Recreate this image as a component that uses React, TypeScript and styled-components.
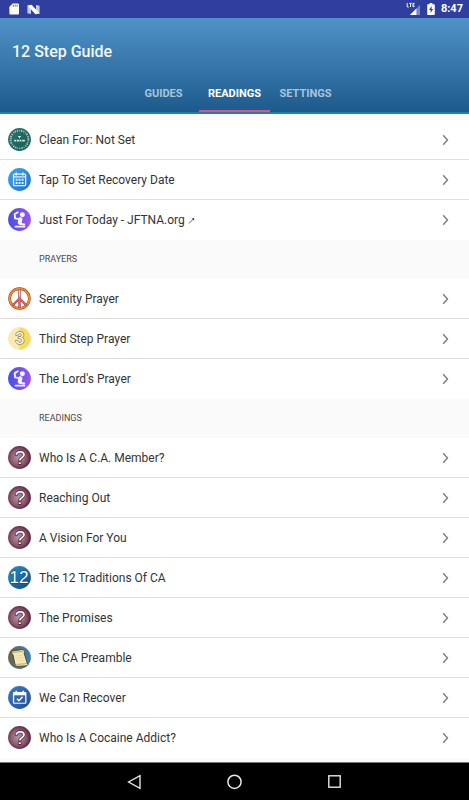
import React, { useState } from "react";
import styled, { createGlobalStyle } from "styled-components";

const GlobalStyle = createGlobalStyle`
  * { box-sizing: border-box; }
  body {
    margin: 0;
    background: #fafafa;
    font-family: Roboto, "Liberation Sans", sans-serif;
  }
`;

const Screen = styled.div`
  display: flex;
  flex-direction: column;
  min-height: 100vh;
`;

const StatusBar = styled.div`
  display: flex;
  align-items: center;
  justify-content: space-between;
  height: 18px;
  padding: 0 6px 0 8px;
  background: #303f9f;
  color: #fff;
`;

const StatusGroup = styled.div<{ $gap: number }>`
  display: flex;
  align-items: center;
  gap: ${(p) => p.$gap}px;
`;

const Clock = styled.time`
  font-size: 11px;
  line-height: 18px;
  font-weight: 700;
`;

const Header = styled.header`
  display: flex;
  flex-direction: column;
  justify-content: space-between;
  height: 96px;
  border-bottom: 2px solid #1c7fa8;
  background: linear-gradient(#5093c8, #1d5a8c);
`;

const Title = styled.h1`
  margin: 0;
  padding: 20px 12px 0;
  color: #f4f7fb;
  font-size: 16px;
  line-height: 28px;
  font-weight: 500;
`;

const Tabs = styled.div`
  display: flex;
  justify-content: center;
`;

const Tab = styled.button<{ $active: boolean }>`
  width: 71px;
  height: 38px;
  padding: 4px 0 0;
  border: 0;
  border-bottom: 2px solid ${(p) => (p.$active ? "#e0528c" : "transparent")};
  background: none;
  color: ${(p) => (p.$active ? "#fff" : "#a9c4da")};
  font: 700 11px/32px Roboto, "Liberation Sans", sans-serif;
  text-align: center;
`;

const Content = styled.main`
  flex: 1;
  padding: 6px 0 3px;
`;

const Section = styled.section``;

const SectionTitle = styled.h2`
  margin: 0;
  padding: 0 39px;
  color: #4a4a4a;
  font-size: 9px;
  line-height: 39px;
  font-weight: 400;
`;

const List = styled.ul`
  margin: 0;
  padding: 0;
  list-style: none;
  background: #fff;
`;

const Item = styled.li`
  border-bottom: 1px solid #e0e0e0;

  &:last-child {
    border-bottom-color: transparent;
  }
`;

const RowLink = styled.a`
  display: flex;
  align-items: center;
  gap: 8px;
  height: 39px;
  padding: 0 20px 0 8px;
  color: #333;
  text-decoration: none;
`;

const Label = styled.span`
  flex: 1;
  font-size: 12px;
  line-height: 18px;
`;

const NavBar = styled.nav`
  display: flex;
  align-items: center;
  justify-content: center;
  gap: 76px;
  height: 38px;
  border-top: 1px solid #777;
  background: #000;
`;

const NavButton = styled.button`
  display: flex;
  align-items: center;
  justify-content: center;
  width: 24px;
  height: 36px;
  padding: 0;
  border: 0;
  background: none;
`;

type IconName = "medal" | "calendar" | "pray" | "peace" | "three" | "question" | "twelve" | "scroll" | "check";

const fills: Record<IconName, [string, string]> = {
  medal: ["#28766d", "#195b56"],
  calendar: ["#3aa7ea", "#2371c8"],
  pray: ["#4650e6", "#9a55f2"],
  peace: ["#fff", "#fff"],
  three: ["#fbe9b4", "#fbe9b4"],
  question: ["#b598a6", "#58203c"],
  twelve: ["#2b90cb", "#124b7d"],
  scroll: ["#6b6546", "#3a80b8"],
  check: ["#3c7bc4", "#234f96"],
};

const glyph = {
  textAnchor: "middle" as const,
  fontFamily: '"Liberation Sans", sans-serif',
  fill: "#fff",
  paintOrder: "stroke",
};

const drawings: Record<IconName, React.ReactNode> = {
  medal: (
    <g fill="none" stroke="#d5e5df">
      <circle cx="12" cy="12" r="9.3" strokeWidth="2" strokeDasharray="1.2 1.3 .7 1 1.5 1.1" opacity=".75" />
      <path d="M10.5 8.8h3M12 8.8v2" strokeWidth="1.1" />
      <path d="M6.5 13.2h2M9.2 13.2h2.2M12 13.2h2M14.8 13.2h2.8" strokeWidth="2" />
      <path d="M3 10v3M21 10v3" strokeWidth=".8" opacity=".6" />
    </g>
  ),
  calendar: (
    <g stroke="#e4f3ff" fill="none">
      <rect x="5.8" y="6.5" width="12.6" height="12" rx="1" strokeWidth="1.3" />
      <path d="M6 9.3h12" strokeWidth="1.3" />
      <path d="M8.7 4.8v3M15.5 4.8v3" strokeWidth="1.6" />
      <path d="M8 12.3h2M11.1 12.3h2M14.2 12.3h2M8 15.6h2M11.1 15.6h2M14.2 15.6h2" strokeWidth="2" />
    </g>
  ),
  pray: (
    <g fill="none" stroke="#f4f2ff" strokeLinecap="round" strokeLinejoin="round">
      <circle cx="15" cy="7" r="2.6" fill="#f4f2ff" stroke="none" />
      <path d="M10.2 4.4 7 6.4l.4 4.4 4.6.8" strokeWidth="2" />
      <path d="M13 11.6 12.2 15.4" strokeWidth="4.2" />
      <path d="M12.5 16.4 17 17.2M7.8 19.4h9.4" strokeWidth="2" />
    </g>
  ),
  peace: (
    <g fill="none">
      <circle cx="12" cy="12" r="10.3" stroke="#8d3821" strokeWidth="2.7" />
      <circle cx="12" cy="12" r="10.3" stroke="#f28a2c" strokeWidth="1.9" />
      <path d="M12 2v20M12 12 4.8 19M12 12l7.2 7" stroke="#862a35" strokeWidth="2.3" />
      <path d="M12 2v20M12 12 4.8 19M12 12l7.2 7" stroke="#e8696a" strokeWidth="1.5" />
      <path d="M12 3v7" stroke="#f8c1b3" strokeWidth="1.2" />
    </g>
  ),
  three: (
    <g>
      <path d="M12 .5a11.5 11.5 0 0 1 0 23Z" fill="#f9d95f" />
      <text x="12.2" y="18" fontSize="17" stroke="#8d7d43" strokeWidth="1.4" {...glyph}>3</text>
    </g>
  ),
  question: (
    <text x="12.6" y="19" fontSize="20" stroke="#3e1c2d" strokeWidth="1.4" {...glyph}>?</text>
  ),
  twelve: (
    <text x="11.6" y="18.2" fontSize="18" stroke="#15456b" strokeWidth="1.2" {...glyph}>12</text>
  ),
  scroll: (
    <g>
      <path d="M4.2 5.2 15.5 3.6l2 2-.7 1.8L20 17.8l1 1.4-1.2 1.5-10.4.6-2-1.6L5.2 9.2 3.4 7Z" fill="#f4e8b5" stroke="#433e2b" strokeWidth=".9" />
      <path d="M4.5 6.8 16 5.6M9 19.2l11-.8" stroke="#b59e5d" strokeWidth=".9" />
      <path d="m8 10.4 7-.7M8.7 13l7-.7M9.4 15.6l7-.7" stroke="#e2d49a" strokeWidth=".7" />
    </g>
  ),
  check: (
    <g fill="none" stroke="#fff">
      <rect x="5.8" y="7" width="12.8" height="11" rx=".7" strokeWidth="1.3" />
      <path d="M5.8 8.4h12.8" strokeWidth="2.6" />
      <path d="M8.6 5v3M15.8 5v3" strokeWidth="1.6" />
      <path d="m9.4 13.3 2 2 3.8-4" strokeWidth="1.5" />
    </g>
  ),
};

function RoundIcon({ name, id }: { name: IconName; id: string }) {
  const [from, to] = fills[name];
  return (
    <svg width="23" height="23" viewBox="0 0 24 24" aria-hidden="true">
      <defs>
        {name === "question" ? (
          <radialGradient id={id} cx=".45" cy=".5" r=".55">
            <stop offset="0" stopColor={from} />
            <stop offset=".6" stopColor="#8c5c74" />
            <stop offset="1" stopColor={to} />
          </radialGradient>
        ) : (
          <linearGradient id={id} x1="0" y1="0" x2="1" y2={name === "scroll" || name === "pray" ? 0 : 1}>
            <stop offset="0" stopColor={from} />
            <stop offset="1" stopColor={to} />
          </linearGradient>
        )}
      </defs>
      <circle cx="12" cy="12" r="11.9" fill={`url(#${id})`} />
      {drawings[name]}
    </svg>
  );
}

function Chevron() {
  return (
    <svg width="8" height="12" viewBox="0 0 8 12" fill="none" stroke="#7a7a7a" strokeWidth="1.4" aria-hidden="true">
      <path d="m2.2 1.2 4.3 4.8-4.3 4.8" />
    </svg>
  );
}

function ExternalArrow() {
  return (
    <svg width="7" height="7" viewBox="0 0 8 8" fill="none" stroke="#333" strokeWidth=".9" role="img" aria-label="external">
      <path d="M1 7.4 6 2.4" />
      <path d="M4.2 1.4h2.8v2.8Z" fill="#333" stroke="none" />
    </svg>
  );
}

type Entry = { icon: IconName; label: string; external?: boolean };

const sections: { title?: string; entries: Entry[] }[] = [
  {
    entries: [
      { icon: "medal", label: "Clean For: Not Set" },
      { icon: "calendar", label: "Tap To Set Recovery Date" },
      { icon: "pray", label: "Just For Today - JFTNA.org", external: true },
    ],
  },
  {
    title: "PRAYERS",
    entries: [
      { icon: "peace", label: "Serenity Prayer" },
      { icon: "three", label: "Third Step Prayer" },
      { icon: "pray", label: "The Lord's Prayer" },
    ],
  },
  {
    title: "READINGS",
    entries: [
      { icon: "question", label: "Who Is A C.A. Member?" },
      { icon: "question", label: "Reaching Out" },
      { icon: "question", label: "A Vision For You" },
      { icon: "twelve", label: "The 12 Traditions Of CA" },
      { icon: "question", label: "The Promises" },
      { icon: "scroll", label: "The CA Preamble" },
      { icon: "check", label: "We Can Recover" },
      { icon: "question", label: "Who Is A Cocaine Addict?" },
    ],
  },
];

const tabs = ["GUIDES", "READINGS", "SETTINGS"];

export default function App() {
  const [active, setActive] = useState("READINGS");
  return (
    <Screen>
      <GlobalStyle />
      <StatusBar>
        <StatusGroup $gap={7}>
          <svg width="12" height="12" viewBox="0 0 12 12" aria-hidden="true">
            <path d="M4.7.5H10q1 0 1 1v9q0 1-1 1H2.4q-1 0-1-1V3.8Z" fill="#fff" />
            <path d="M5.3 1.7v2M7.2 1.7v2M9.1 1.7v2" stroke="#303f9f" strokeWidth=".8" />
          </svg>
          <svg width="13" height="11" viewBox="0 0 13 11" aria-hidden="true">
            <path d="M.4 1.4 4 3.8V10L.4 9.2ZM9 1l3.6.8v8L9 7.4Z" fill="#c3c9ec" />
            <path d="M.4 1.4 4.6.8 12.6 9.6l-4.2.6Z" fill="#fff" />
          </svg>
        </StatusGroup>
        <StatusGroup $gap={6}>
          <svg width="15" height="14" viewBox="0 0 15 14" aria-label="LTE" role="img">
            <path d="M14 3v10H4Z" fill="#7d87c6" />
            <path d="M10.4 6.6V13H4Z" fill="#fff" />
            <path d="M1.2 1v4h1.6M3.2 1.4h2.6M4.5 1.4V5M8.6 1.4H6.9V4.6h1.7M6.9 3h1.5" fill="none" stroke="#fff" strokeWidth=".9" />
          </svg>
          <svg width="8" height="12" viewBox="0 0 8 12" aria-hidden="true">
            <path d="M2.6 0h2.8v1.2H7q.8 0 .8.8v9q0 .9-.8.9H1q-.8 0-.8-.9V2q0-.8.8-.8h1.6Z" fill="#fff" />
            <path d="M4.6 3 2 7h1.6v3L6.1 6H4.6Z" fill="#303f9f" />
          </svg>
          <Clock>8:47</Clock>
        </StatusGroup>
      </StatusBar>
      <Header>
        <Title>12 Step Guide</Title>
        <Tabs role="tablist">
          {tabs.map((t) => (
            <Tab key={t} type="button" role="tab" aria-selected={t === active} $active={t === active} onClick={() => setActive(t)}>
              {t}
            </Tab>
          ))}
        </Tabs>
      </Header>
      <Content>
        {sections.map((s, si) => (
          <Section key={si}>
            {s.title && <SectionTitle>{s.title}</SectionTitle>}
            <List>
              {s.entries.map((e, i) => (
                <Item key={e.label}>
                  <RowLink href="#">
                    <RoundIcon name={e.icon} id={`fill-${si}-${i}`} />
                    <Label>
                      {e.label} {e.external && <ExternalArrow />}
                    </Label>
                    <Chevron />
                  </RowLink>
                </Item>
              ))}
            </List>
          </Section>
        ))}
      </Content>
      <NavBar>
        <NavButton type="button" aria-label="Back">
          <svg width="16" height="16" viewBox="0 0 16 16" fill="none" stroke="#e6e6e6" strokeWidth="1.4">
            <path d="M13 1.6v12.8L1.6 8Z" />
          </svg>
        </NavButton>
        <NavButton type="button" aria-label="Home">
          <svg width="16" height="16" viewBox="0 0 16 16" fill="none" stroke="#e6e6e6" strokeWidth="1.5">
            <circle cx="7.5" cy="7.8" r="6.6" />
          </svg>
        </NavButton>
        <NavButton type="button" aria-label="Recent apps">
          <svg width="16" height="16" viewBox="0 0 16 16" fill="none" stroke="#e6e6e6" strokeWidth="1.4">
            <rect x="1.8" y="1.8" width="11.4" height="11.4" />
          </svg>
        </NavButton>
      </NavBar>
    </Screen>
  );
}
